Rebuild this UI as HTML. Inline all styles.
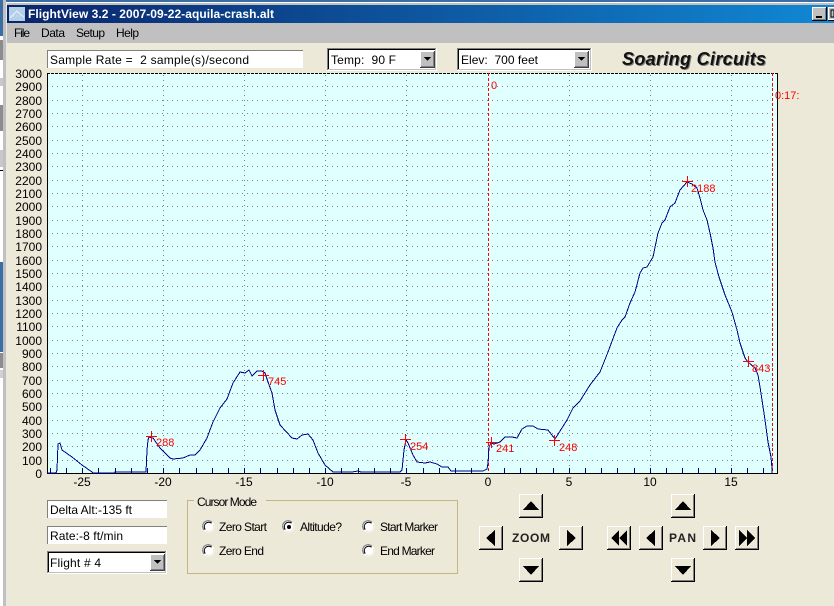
<!DOCTYPE html>
<html><head><meta charset="utf-8"><title>FlightView 3.2</title>
<style>
html,body{margin:0;padding:0;width:834px;height:606px;overflow:hidden;background:#ece9d8}
svg{display:block;position:absolute;left:0;top:0}
text{font-family:"Liberation Sans",sans-serif;font-size:12px;fill:#000;white-space:pre}
.y{text-anchor:end}.x{text-anchor:middle}
.r{fill:#f00}
</style></head><body>
<svg width="834" height="606" viewBox="0 0 834 606" xmlns="http://www.w3.org/2000/svg">
<defs>
<linearGradient id="tb" x1="0" x2="1" y1="0" y2="0"><stop offset="0" stop-color="#0a246a"/><stop offset="1" stop-color="#1188d4"/></linearGradient>
<g id="btn" shape-rendering="crispEdges">
<rect x="0" y="0" width="24" height="24" fill="#000"/>
<rect x="0" y="0" width="23" height="23" fill="#fff"/>
<rect x="1" y="1" width="22" height="22" fill="#808080"/>
<rect x="1" y="1" width="21" height="21" fill="#ece9d8"/>
</g>
<g id="dd" shape-rendering="crispEdges">
<rect x="0" y="0" width="15" height="17" fill="#404040"/>
<rect x="0" y="0" width="14" height="16" fill="#fff"/>
<rect x="1" y="1" width="13" height="15" fill="#808080"/>
<rect x="1" y="1" width="12" height="14" fill="#c0c0c0"/>
<polygon points="4,6 11,6 7.5,10" fill="#000"/>
</g>
<g id="radio">
<circle cx="0" cy="0" r="6" fill="#fff"/>
<path d="M-4.2 3.5A5.4 5.4 0 0 1 3.5 -4.2" fill="none" stroke="#808080" stroke-width="1.2"/>
<path d="M-3.2 3A4.4 4.4 0 0 1 3 -3.2" fill="none" stroke="#000" stroke-width="1"/>
<path d="M4.5 -2.5A5.2 5.2 0 0 1 -2.5 4.5" fill="none" stroke="#ece9d8" stroke-width="1"/>
</g>
</defs>

<!-- background windows at the left/top -->
<rect x="0" y="0" width="834" height="606" fill="#ece9d8"/>
<g shape-rendering="crispEdges">
<rect x="0" y="0" width="834" height="2" fill="#3a6ea5"/>
<rect x="0" y="2" width="834" height="1" fill="#fff"/>
<rect x="0" y="3" width="834" height="2" fill="#c0c0c0"/>
<rect x="0" y="0" width="6" height="606" fill="#fff"/>
<rect x="0" y="0" width="3" height="36" fill="#3a6ea5"/>
<rect x="0" y="40" width="3" height="20" fill="#8c8c8c"/>
<rect x="0" y="78" width="3" height="8" fill="#c8c8c8"/>
<rect x="0" y="105" width="3" height="26" fill="#8c8c8c"/>
<rect x="0" y="150" width="3" height="17" fill="#c8c8c8"/>
<rect x="0" y="170" width="3" height="1" fill="#000"/>
<rect x="0" y="262" width="3" height="90" fill="#3a6ea5"/>
<rect x="0" y="353" width="3" height="15" fill="#8c8c8c"/>
<rect x="0" y="370" width="3" height="8" fill="#d0d0d0"/>
<rect x="3" y="0" width="3" height="606" fill="#c0c0c0"/>
<rect x="6" y="3" width="1" height="603" fill="#e8e8e8"/>
<!-- title bar -->
<rect x="7" y="5" width="827" height="18" fill="url(#tb)"/>
<!-- menu -->
<rect x="7" y="23" width="827" height="20" fill="#c0c0c0"/>
<!-- window buttons -->
<rect x="812" y="7" width="15" height="14" fill="#000"/>
<rect x="812" y="7" width="14" height="13" fill="#fff"/>
<rect x="813" y="8" width="13" height="12" fill="#808080"/>
<rect x="813" y="8" width="12" height="11" fill="#c0c0c0"/>
<rect x="816" y="16" width="6" height="2" fill="#000"/>
<rect x="828" y="7" width="6" height="14" fill="#000"/>
<rect x="828" y="7" width="6" height="13" fill="#fff"/>
<rect x="829" y="8" width="5" height="11" fill="#c0c0c0"/>
<rect x="831" y="10" width="3" height="7" fill="none" stroke="#000"/>
</g>
<!-- title icon -->
<rect x="9" y="7" width="16" height="14" fill="#b4cfe8"/>
<path d="M10 18L14 14L17 11L20 14L24 17" fill="none" stroke="#e8f2fa" stroke-width="1"/>
<path d="M10 16H24" fill="none" stroke="#d8e8f8" stroke-width="1" stroke-dasharray="1 2"/>
<text x="28" y="18" textLength="246" lengthAdjust="spacing" style="font-weight:bold;fill:#fff;font-size:12px">FlightView 3.2 - 2007-09-22-aquila-crash.alt</text>
<text x="14" y="37" textLength="16" lengthAdjust="spacing">File</text>
<text x="41" y="37" textLength="24" lengthAdjust="spacing">Data</text>
<text x="76" y="37" textLength="29" lengthAdjust="spacing">Setup</text>
<text x="116" y="37" textLength="23" lengthAdjust="spacing">Help</text>

<!-- top fields -->
<g shape-rendering="crispEdges">
<rect x="47" y="50" width="256" height="18" fill="#fff"/>
<rect x="47" y="50" width="256" height="1" fill="#808080"/>
<rect x="47" y="50" width="1" height="18" fill="#808080"/>
<rect x="327" y="48" width="110" height="23" fill="#fff"/>
<rect x="327" y="48" width="109" height="22" fill="#808080"/>
<rect x="328" y="49" width="108" height="21" fill="#c0c0c0"/>
<rect x="328" y="49" width="107" height="20" fill="#000"/>
<rect x="329" y="50" width="106" height="19" fill="#fff"/>
<rect x="457" y="48" width="135" height="23" fill="#fff"/>
<rect x="457" y="48" width="134" height="22" fill="#808080"/>
<rect x="458" y="49" width="133" height="21" fill="#c0c0c0"/>
<rect x="458" y="49" width="132" height="20" fill="#000"/>
<rect x="459" y="50" width="131" height="19" fill="#fff"/>
</g>
<use href="#dd" x="420" y="51"/>
<use href="#dd" x="574" y="51"/>
<text x="50" y="64" textLength="199" lengthAdjust="spacing">Sample Rate =  2 sample(s)/second</text>
<text x="331" y="64" textLength="65" lengthAdjust="spacing">Temp:  90 F</text>
<text x="461" y="64" textLength="77" lengthAdjust="spacing">Elev:  700 feet</text>
<text x="622" y="65" textLength="144" lengthAdjust="spacing" style="font-weight:bold;font-style:italic;font-size:18px;fill:#7a7a7a" transform="translate(1,1)">Soaring Circuits</text>
<text x="622" y="65" textLength="144" lengthAdjust="spacing" style="font-weight:bold;font-style:italic;font-size:18px;fill:#111">Soaring Circuits</text>

<!-- plot -->
<rect x="47" y="73" width="730" height="400" fill="#e0ffff" shape-rendering="crispEdges"/>
<g shape-rendering="crispEdges" stroke="#808080" stroke-width="1" stroke-dasharray="1 4" fill="none">
<path d="M52 86.5H777M52 100.5H777M52 113.5H777M52 126.5H777M52 140.5H777M52 153.5H777M52 166.5H777M52 180.5H777M52 193.5H777M52 206.5H777M52 220.5H777M52 233.5H777M52 246.5H777M52 260.5H777M52 273.5H777M52 286.5H777M52 300.5H777M52 313.5H777M52 326.5H777M52 340.5H777M52 353.5H777M52 366.5H777M52 380.5H777M52 393.5H777M52 406.5H777M52 420.5H777M52 433.5H777M52 446.5H777M52 460.5H777"/>
<path d="M82.5 75V473M163.5 75V473M244.5 75V473M325.5 75V473M406.5 75V473M569.5 75V473M650.5 75V473M731.5 75V473"/>
</g>
<g shape-rendering="crispEdges" fill="none">
<path d="M47.5 73V473.5H777.5V73" stroke="#000"/>
<path d="M47 73.5H777" stroke="#000" stroke-dasharray="3 1"/>
<path d="M50.5 468V473M66.5 468V473M82.5 468V473M98.5 468V473M115.5 468V473M131.5 468V473M147.5 468V473M163.5 468V473M179.5 468V473M196.5 468V473M212.5 468V473M228.5 468V473M244.5 468V473M260.5 468V473M277.5 468V473M293.5 468V473M309.5 468V473M325.5 468V473M341.5 468V473M358.5 468V473M374.5 468V473M390.5 468V473M406.5 468V473M423.5 468V473M439.5 468V473M455.5 468V473M471.5 468V473M504.5 468V473M520.5 468V473M536.5 468V473M553.5 468V473M569.5 468V473M585.5 468V473M601.5 468V473M617.5 468V473M634.5 468V473M650.5 468V473M666.5 468V473M682.5 468V473M698.5 468V473M715.5 468V473M731.5 468V473M747.5 468V473M763.5 468V473" stroke="#00008b"/>
<path d="M488.5 73V473M772.5 73V473" stroke="#f00" stroke-dasharray="3 2"/>
</g>
<polyline shape-rendering="crispEdges" fill="none" stroke="#00008b" stroke-width="1" points="47,473 56,473 57,470 58,444 60,443 62,450 72,457 82,465 92,472 93,473 115,473 115,472 146,472 147,450 148,440 149,437 153,438 160,448 170,458 173,459 183,458 190,455 195,455 200,450 207,438 213,422 220,408 227,399 233,383 240,372 245,373 249,370 252,376 255,373 257,371 262,371 265,373 268,382 272,393 275,410 280,425 292,438 297,439 302,435 308,434 313,440 318,453 325,465 333,472 352,472 358,471 361,472 400,472 402,470 404,450 406,440 408,443 413,455 417,462 425,463 430,462 437,464 442,467 448,467 451,471 483,471 487,469 488,463 489,447 491,443 494,444 500,442 505,437 512,437 517,438 522,429 527,426 533,426 538,429 548,430 555,439 567,420 573,408 580,401 590,385 600,372 608,352 617,328 622,320 625,317 630,303 635,292 640,273 643,268 647,267 653,257 658,233 662,223 665,220 670,207 675,203 680,190 687,182 692,184 697,188 700,198 703,210 707,220 710,233 713,248 715,262 719,277 725,295 732,312 737,330 740,343 745,358 748,362 755,368 758,375 760,387 762,400 765,420 768,442 771,457 772,468 772,473"/>
<!-- markers -->
<path shape-rendering="crispEdges" fill="none" stroke="#f00" d="M146 436.5H157M151.5 431V442M258 375.5H269M263.5 370V381M400 439.5H411M405.5 434V445M486 442.5H497M491.5 437V448M549 440.5H560M554.5 435V446M682 181.5H693M687.5 176V187M743 361.5H754M748.5 356V367"/>
<g class="r">
<text class="r" x="491" y="89" style="font-size:11px">0</text>
<text class="r" x="775" y="99" style="font-size:11px">0:17:</text>
<text class="r" x="691" y="192" style="font-size:11px">2188</text>
<text class="r" x="268" y="385" style="font-size:11px">745</text>
<text class="r" x="156" y="446" style="font-size:11px">288</text>
<text class="r" x="410" y="450" style="font-size:11px">254</text>
<text class="r" x="496" y="452" style="font-size:11px">241</text>
<text class="r" x="559" y="451" style="font-size:11px">248</text>
<text class="r" x="752" y="372" style="font-size:11px">843</text>
</g>
<!-- y labels -->
<g style="font-size:11.5px">
<text class="y" x="42" y="78">3000</text><text class="y" x="42" y="91">2900</text><text class="y" x="42" y="105">2800</text><text class="y" x="42" y="118">2700</text><text class="y" x="42" y="131">2600</text><text class="y" x="42" y="145">2500</text><text class="y" x="42" y="158">2400</text><text class="y" x="42" y="171">2300</text><text class="y" x="42" y="185">2200</text><text class="y" x="42" y="198">2100</text><text class="y" x="42" y="211">2000</text><text class="y" x="42" y="225">1900</text><text class="y" x="42" y="238">1800</text><text class="y" x="42" y="251">1700</text><text class="y" x="42" y="265">1600</text><text class="y" x="42" y="278">1500</text><text class="y" x="42" y="291">1400</text><text class="y" x="42" y="305">1300</text><text class="y" x="42" y="318">1200</text><text class="y" x="42" y="331">1100</text><text class="y" x="42" y="345">1000</text><text class="y" x="42" y="358">900</text><text class="y" x="42" y="371">800</text><text class="y" x="42" y="385">700</text><text class="y" x="42" y="398">600</text><text class="y" x="42" y="411">500</text><text class="y" x="42" y="425">400</text><text class="y" x="42" y="438">300</text><text class="y" x="42" y="451">200</text><text class="y" x="42" y="465">100</text><text class="y" x="42" y="478">0</text>
</g>
<!-- x labels -->
<text class="x" x="82" y="486">-25</text><text class="x" x="163" y="486">-20</text><text class="x" x="244" y="486">-15</text><text class="x" x="325" y="486">-10</text><text class="x" x="406" y="486">-5</text><text class="x" x="488" y="486">0</text><text class="x" x="569" y="486">5</text><text class="x" x="650" y="486">10</text><text class="x" x="731" y="486">15</text>

<!-- lower left -->
<g shape-rendering="crispEdges">
<rect x="47" y="500" width="120" height="18" fill="#fff"/><rect x="47" y="500" width="120" height="1" fill="#808080"/><rect x="47" y="500" width="1" height="18" fill="#808080"/>
<rect x="47" y="526" width="120" height="18" fill="#fff"/><rect x="47" y="526" width="120" height="1" fill="#808080"/><rect x="47" y="526" width="1" height="18" fill="#808080"/>
<rect x="47" y="551" width="120" height="23" fill="#fff"/>
<rect x="47" y="551" width="119" height="22" fill="#808080"/>
<rect x="48" y="552" width="118" height="21" fill="#c0c0c0"/>
<rect x="48" y="552" width="117" height="20" fill="#000"/>
<rect x="49" y="553" width="116" height="19" fill="#fff"/>
</g>
<use href="#dd" x="150" y="554"/>
<text x="50" y="514" textLength="82" lengthAdjust="spacing">Delta Alt:-135 ft</text>
<text x="50" y="540" textLength="73" lengthAdjust="spacing">Rate:-8 ft/min</text>
<text x="50" y="567" textLength="51" lengthAdjust="spacing">Flight # 4</text>

<!-- cursor mode -->
<rect x="187.5" y="500.5" width="270" height="73" fill="none" stroke="#c3b77f" shape-rendering="crispEdges"/>
<rect x="194" y="496" width="72" height="10" fill="#ece9d8"/>
<text x="197" y="506" textLength="60" lengthAdjust="spacing">Cursor Mode</text>
<use href="#radio" x="208.5" y="526.5"/><use href="#radio" x="288.5" y="526.5"/><use href="#radio" x="368.5" y="526.5"/>
<use href="#radio" x="208.5" y="550.5"/><use href="#radio" x="368.5" y="550.5"/>
<circle cx="289" cy="527" r="2" fill="#000"/>
<text x="219" y="531" textLength="48" lengthAdjust="spacing">Zero Start</text>
<text x="300" y="531" textLength="42" lengthAdjust="spacing">Altitude?</text>
<text x="380" y="531" textLength="58" lengthAdjust="spacing">Start Marker</text>
<text x="219" y="555" textLength="45" lengthAdjust="spacing">Zero End</text>
<text x="380" y="555" textLength="55" lengthAdjust="spacing">End Marker</text>

<!-- buttons -->
<use href="#btn" x="519" y="494"/><use href="#btn" x="479" y="526"/><use href="#btn" x="559" y="526"/><use href="#btn" x="519" y="558"/>
<use href="#btn" x="671" y="494"/><use href="#btn" x="607" y="526"/><use href="#btn" x="639" y="526"/><use href="#btn" x="703" y="526"/><use href="#btn" x="735" y="526"/><use href="#btn" x="671" y="558"/>
<g fill="#000" shape-rendering="crispEdges">
<polygon points="523,510 539,510 531,501"/>
<polygon points="675,510 691,510 683,501"/>
<polygon points="523,566 539,566 531,575"/>
<polygon points="675,566 691,566 683,575"/>
<polygon points="495,530 495,546 486,538"/>
<polygon points="567,530 567,546 576,538"/>
<polygon points="655,530 655,546 646,538"/>
<polygon points="711,530 711,546 720,538"/>
<polygon points="619,530 619,546 611,538"/><polygon points="627,530 627,546 619,538"/>
<polygon points="739,530 739,546 747,538"/><polygon points="747,530 747,546 755,538"/>
</g>
<text x="512" y="542" textLength="38" lengthAdjust="spacing" style="font-weight:bold;fill:#222">ZOOM</text>
<text x="669" y="542" textLength="27" lengthAdjust="spacing" style="font-weight:bold;fill:#222">PAN</text>
</svg>
</body></html>
